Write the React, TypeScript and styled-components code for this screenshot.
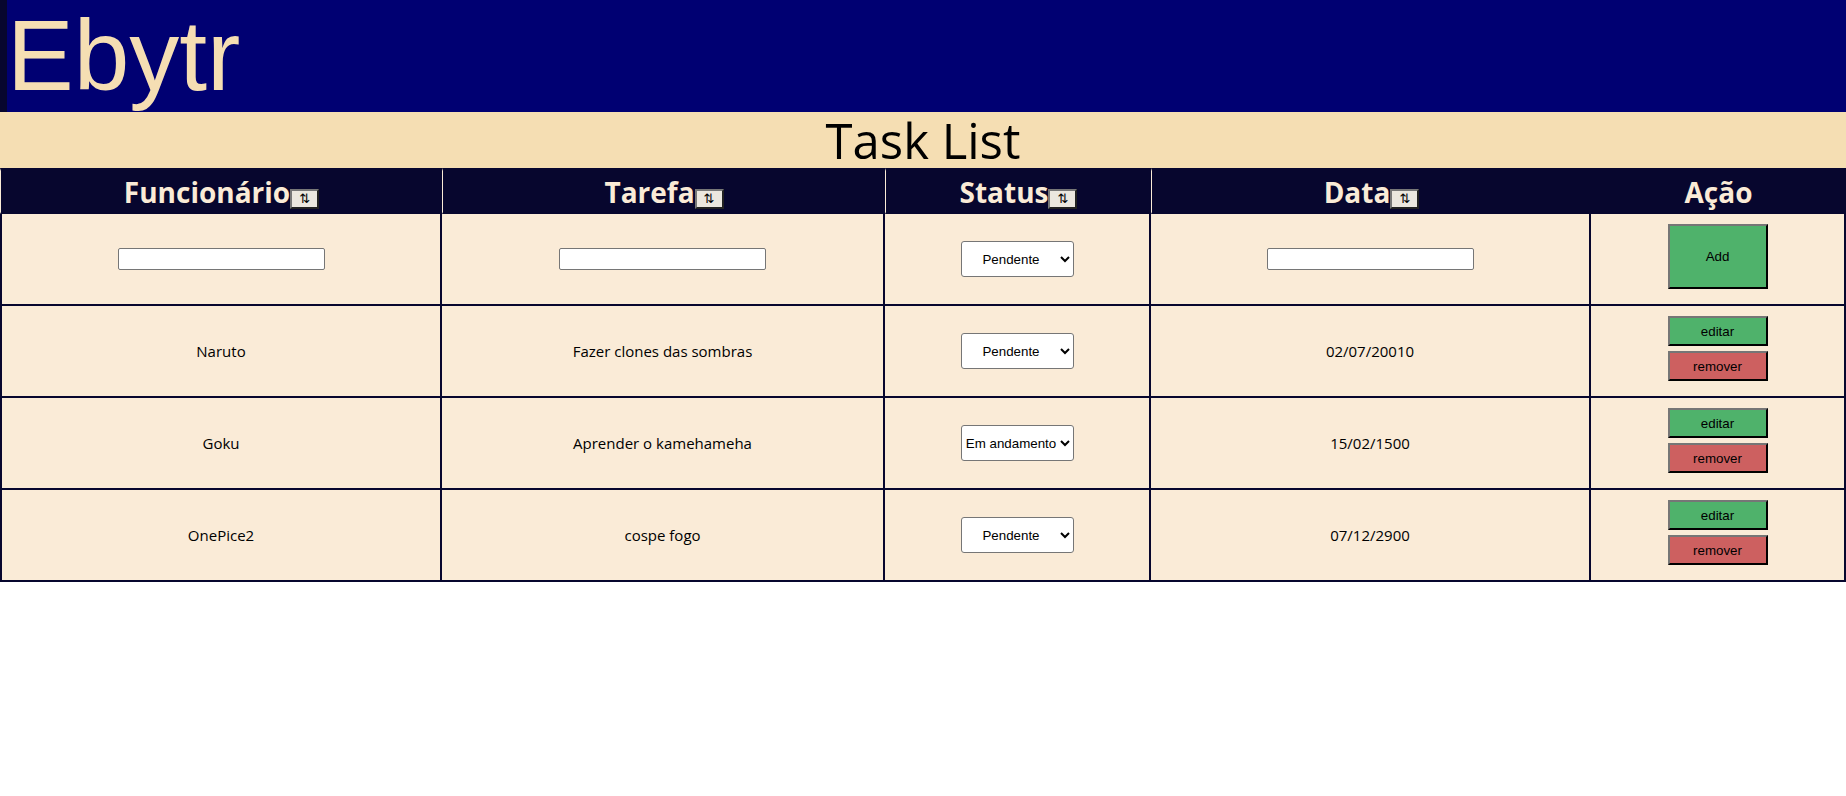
import React from 'react';
import styled, { createGlobalStyle } from 'styled-components';

const GlobalStyle = createGlobalStyle`
    body {
        margin: 0;
        background: #ffffff;
        font-family: 'Open Sans', 'Noto Sans', sans-serif;
    }
`;

const palette = {
    navy: '#000072',
    ink: '#07062e',
    wheat: '#f5deb3',
    antique: '#faebd7',
    green: '#4fb26b',
    red: '#cd6060',
};

const Header = styled.header`
    height: 112px;
    background-color: ${palette.navy};
    border-left: 7px solid ${palette.ink};
    box-sizing: border-box;

    h1 {
        margin: 0;
        font-family: 'Liberation Sans', Arial, sans-serif;
        font-weight: 400;
        font-size: 100px;
        line-height: 111px;
        height: 112px;
        color: ${palette.wheat};
    }
`;

const TitleBar = styled.div`
    height: 56px;
    background-color: ${palette.wheat};
    text-align: center;
    font-size: 49px;
    line-height: 56px;
    color: #000000;
`;

const Table = styled.table`
    width: 100%;
    table-layout: fixed;
    border-collapse: separate;
    border-spacing: 0;
`;

const HeadCell = styled.th`
    height: 46px;
    padding: 0;
    box-sizing: border-box;
    background-color: ${palette.ink};
    border-top: 3px solid ${palette.ink};
    border-bottom: 2px solid ${palette.ink};
    border-left: 1px solid ${palette.antique};
    color: ${palette.antique};
    font-size: 28px;
    font-weight: 700;
    text-align: center;

    &:last-child {
        border-left: none;
    }
`;

const SortButton = styled.button`
    width: 29px;
    height: 20px;
    padding: 0;
    font-family: 'DejaVu Sans', sans-serif;
    font-size: 13px;
    line-height: 14px;
    color: #000000;
    background-color: #ebe7df;
    border: 2px outset #777777;
`;

const Cell = styled.td`
    height: 92px;
    padding: 0;
    box-sizing: border-box;
    background-color: ${palette.antique};
    border-right: 2px solid ${palette.ink};
    border-bottom: 2px solid ${palette.ink};
    text-align: center;
    vertical-align: middle;
    font-size: 15px;
    color: #000000;

    &:first-child {
        border-left: 2px solid ${palette.ink};
    }
`;

const TextInput = styled.input`
    width: 207px;
    height: 22px;
    box-sizing: border-box;
    border: 1px solid #767676;
    border-radius: 2px;
    background: #ffffff;
`;

const StatusSelect = styled.select`
    width: 113px;
    height: 36px;
    box-sizing: border-box;
    font-family: 'Liberation Sans', Arial, sans-serif;
    font-size: 13.33px;
    text-align: center;
    background: #ffffff;
    border: 1px solid #767676;
    border-radius: 3px;
    color: #000000;
`;

const Actions = styled.div`
    display: flex;
    flex-direction: column;
    align-items: center;
    gap: 5px;
    margin-bottom: 5px;
`;

const ActionButton = styled.button<{ $tone: 'green' | 'red'; $tall?: boolean }>`
    width: 100px;
    height: ${p => (p.$tall ? '65px' : '30px')};
    padding: 0;
    font-family: 'Liberation Sans', Arial, sans-serif;
    font-size: 13.33px;
    color: #000000;
    background-color: ${p => (p.$tone === 'green' ? palette.green : palette.red)};
    border: 2px outset #767676;
    border-right-color: #2a2a2a;
    border-bottom-color: #2a2a2a;
`;

interface ITask {
    name: string;
    task: string;
    status: string;
    date: string;
}

const tasks: ITask[] = [
    { name: 'Naruto', task: 'Fazer clones das sombras', status: 'Pendente', date: '02/07/20010' },
    { name: 'Goku', task: 'Aprender o kamehameha', status: 'Em andamento', date: '15/02/1500' },
    { name: 'OnePice2', task: 'cospe fogo', status: 'Pendente', date: '07/12/2900' },
];

const columns = ['Funcionário', 'Tarefa', 'Status', 'Data'];
const widths = [442, 443, 266, 440, 255];
const statuses = ['Pendente', 'Em andamento', 'Pronto'];

const StatusField: React.FC<{ value: string }> = ({ value }) => (
    <StatusSelect defaultValue={value}>
        {statuses.map(s => (
            <option key={s} value={s}>
                {s}
            </option>
        ))}
    </StatusSelect>
);

const App: React.FC = () => (
    <>
        <GlobalStyle />
        <Header>
            <h1>Ebytr</h1>
        </Header>
        <TitleBar>Task List</TitleBar>
        <Table>
            <colgroup>
                {widths.map((w, i) => (
                    <col key={i} style={{ width: w }} />
                ))}
            </colgroup>
            <thead>
                <tr>
                    {columns.map(c => (
                        <HeadCell key={c}>
                            {c}
                            <SortButton type="button">⇅</SortButton>
                        </HeadCell>
                    ))}
                    <HeadCell>Ação</HeadCell>
                </tr>
            </thead>
            <tbody>
                <tr>
                    <Cell>
                        <TextInput type="text" />
                    </Cell>
                    <Cell>
                        <TextInput type="text" />
                    </Cell>
                    <Cell>
                        <StatusField value="Pendente" />
                    </Cell>
                    <Cell>
                        <TextInput type="text" />
                    </Cell>
                    <Cell>
                        <Actions>
                            <ActionButton $tone="green" $tall>
                                Add
                            </ActionButton>
                        </Actions>
                    </Cell>
                </tr>
                {tasks.map(t => (
                    <tr key={t.name}>
                        <Cell>{t.name}</Cell>
                        <Cell>{t.task}</Cell>
                        <Cell>
                            <StatusField value={t.status} />
                        </Cell>
                        <Cell>{t.date}</Cell>
                        <Cell>
                            <Actions>
                                <ActionButton $tone="green">editar</ActionButton>
                                <ActionButton $tone="red">remover</ActionButton>
                            </Actions>
                        </Cell>
                    </tr>
                ))}
            </tbody>
        </Table>
    </>
);

export default App;
